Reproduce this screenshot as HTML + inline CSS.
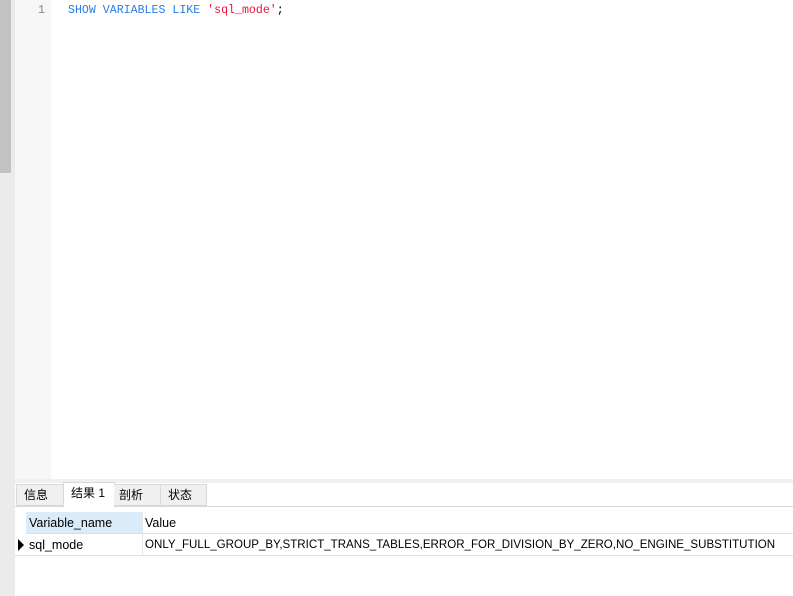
<!DOCTYPE html>
<html><head><style>
body{margin:0;width:793px;height:596px;overflow:hidden;background:#fff;font-family:"Liberation Sans","Noto Sans CJK SC",sans-serif;position:relative}
div{position:absolute;box-sizing:border-box}
.code{font-family:"Liberation Mono","DejaVu Sans Mono",monospace;font-size:11.6px}
.tab{top:484px;height:22px;font-size:12px;line-height:21px;padding-left:7px;border:1px solid #d9d9d9;background:#f0f0f0;color:#000}
.cell{font-size:12.5px;line-height:22px;color:#000}
</style></head><body>
<div style="left:0;top:0;width:15px;height:596px;background:#ebebeb"></div>
<div style="left:0;top:0;width:11px;height:173px;background:#c2c2c2"></div>
<div style="left:15px;top:0;width:36px;height:479px;background:#f7f7f7"></div>
<div class="code" style="left:38px;top:4px;color:#888">1</div>
<div class="code" style="left:68px;top:4px;white-space:pre"><span style="color:#2a7ce8">SHOW VARIABLES LIKE </span><span style="color:#e8163c">'sql_mode'</span><span>;</span></div>
<div style="left:15px;top:479px;width:778px;height:4px;background:#f0f0f0"></div>
<div style="left:15px;top:506px;width:778px;height:1px;background:#d9d9d9"></div>
<div class="tab" style="left:16px;width:48px">信息</div>
<div class="tab" style="left:63px;top:482px;height:25px;width:52px;background:#fff;border-bottom:none">结果 1</div>
<div class="tab" style="left:114px;width:47px;border-left:none;padding-left:5px">剖析</div>
<div class="tab" style="left:160px;width:47px">状态</div>
<div style="left:26px;top:512px;width:116px;height:22px;background:#dcebf8"></div>
<div class="cell" style="left:29px;top:512px">Variable_name</div>
<div class="cell" style="left:145px;top:512px">Value</div>
<div style="left:142px;top:512px;width:1px;height:44px;background:#e6e6e6"></div>
<div style="left:26px;top:533px;width:767px;height:1px;background:#e0e0e0"></div>
<div style="left:15px;top:555px;width:778px;height:1px;background:#e0e0e0"></div>
<div style="left:18px;top:539px;width:0;height:0;border-top:6px solid transparent;border-bottom:6px solid transparent;border-left:6px solid #000"></div>
<div class="cell" style="left:29px;top:534px">sql_mode</div>
<div class="cell" style="left:145px;top:534px;white-space:nowrap;font-size:11.55px">ONLY_FULL_GROUP_BY,STRICT_TRANS_TABLES,ERROR_FOR_DIVISION_BY_ZERO,NO_ENGINE_SUBSTITUTION</div>
</body></html>
